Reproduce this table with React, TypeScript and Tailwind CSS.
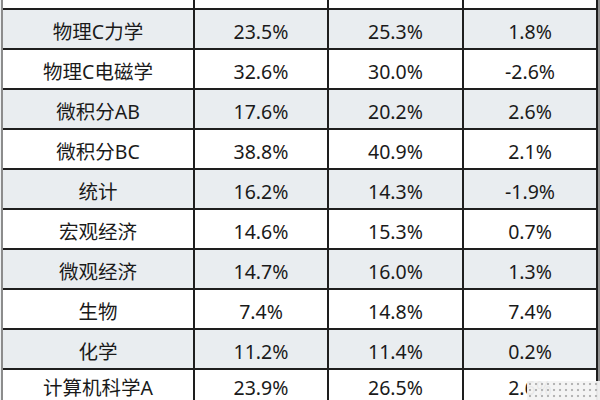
import React from 'react'

const rows = [
  ['物理C力学', '23.5%', '25.3%', '1.8%'],
  ['物理C电磁学', '32.6%', '30.0%', '-2.6%'],
  ['微积分AB', '17.6%', '20.2%', '2.6%'],
  ['微积分BC', '38.8%', '40.9%', '2.1%'],
  ['统计', '16.2%', '14.3%', '-1.9%'],
  ['宏观经济', '14.6%', '15.3%', '0.7%'],
  ['微观经济', '14.7%', '16.0%', '1.3%'],
  ['生物', '7.4%', '14.8%', '7.4%'],
  ['化学', '11.2%', '11.4%', '0.2%'],
  ['计算机科学A', '23.9%', '26.5%', '2.6%'],
]

export default function App() {
  return (
    <div
      className="relative flex w-[600px] h-[400px] overflow-hidden bg-[#f4f6f7] text-[#1a1a1a]"
      style={{ fontFamily: '"Noto Sans", "Noto Sans CJK SC", sans-serif' }}
    >
      <div className="w-[1px] shrink-0 bg-[#eef1f3]" />
      <div className="grid grid-cols-[190px_132px_133px_132px] grid-rows-[8px_repeat(9,38px)_30px] gap-[2px] border-l-2 border-[#8c8c8c] pr-[2px] bg-[#1e1e1e] h-[400px]">
        {/* top partial row */}
        <div className="bg-white" />
        <div className="bg-white" />
        <div className="bg-white" />
        <div className="bg-white" />
        {rows.map((r, i) => {
          const bg = i % 2 === 0 ? 'bg-[#e9edf0]' : 'bg-white'
          return r.map((c, j) => (
            <div
              key={i + '-' + j}
              className={`${bg} flex items-center justify-center text-[19.5px] leading-none pt-[6px]`}
            >
              {c}
            </div>
          ))
        })}
      </div>
      <div className="w-[2px] shrink-0 bg-[#8f8f8f]" />

      {/* watermark overlay */}
      <div className="absolute left-[527px] top-[381px] w-[73px] h-[19px] bg-[#f3f3f3]/95 bg-[radial-gradient(circle,#b5b5b5_1px,transparent_1.6px)] bg-[length:6px_6px]" />
    </div>
  )
}
